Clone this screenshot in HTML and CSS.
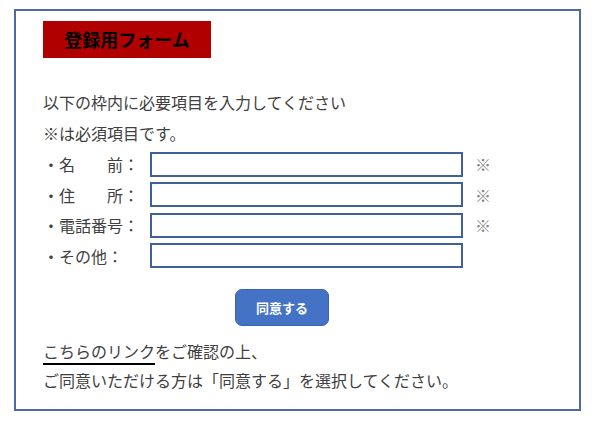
FILE: index.html
```html
<!DOCTYPE html>
<html>
  <head>
    <meta charset="utf-8" />
    <title>登録用フォーム</title>
    <link rel="stylesheet" href="styles.css">
  </head>
  <body>
    <div class="form-box">
      <div class="title">登録用フォーム</div>

      <p class="intro">以下の枠内に必要項目を入力してください</p>
      <p class="intro">※は必須項目です。</p>

      <div class="row">
        <span class="label">・名　　前：</span>
        <input class="field" type="text">
        <span class="req">※</span>
      </div>
      <div class="row">
        <span class="label">・住　　所：</span>
        <input class="field" type="text">
        <span class="req">※</span>
      </div>
      <div class="row">
        <span class="label">・電話番号：</span>
        <input class="field" type="text">
        <span class="req">※</span>
      </div>
      <div class="row">
        <span class="label">・その他：</span>
        <input class="field" type="text">
      </div>

      <button class="agree-btn">同意する</button>

      <p class="note"><a class="link" href="#">こちらのリンク</a>をご確認の上、</p>
      <p class="note">ご同意いただける方は「同意する」を選択してください。</p>
    </div>
  </body>
</html>
```

FILE: styles.css
```css
* {
  margin: 0;
  padding: 0;
  box-sizing: border-box;
}

body {
  width: 614px;
  height: 423px;
  background: #ffffff;
  font-family: "Noto Sans CJK JP", "Noto Sans", sans-serif;
  font-size: 16px;
  color: #404040;
  overflow: hidden;
}

.form-box {
  margin: 9px 0 0 14px;
  width: 567px;
  height: 402px;
  border: 2px solid #4d6aa3;
  padding: 10px 0 0 27px;
}

.title {
  width: 168px;
  height: 37px;
  line-height: 37px;
  background: #b00000;
  color: #000000;
  font-size: 18px;
  font-weight: 700;
  text-align: center;
}

.intro {
  line-height: 31px;
}

.intro:first-of-type {
  margin-top: 29px;
}

.row {
  display: flex;
  align-items: center;
  height: 30.5px;
}

.row:first-of-type {
  margin-top: 1px;
}

.label {
  width: 107px;
  white-space: nowrap;
}

.field {
  width: 313px;
  height: 25px;
  border: 2px solid #40609c;
  background: #ffffff;
  outline: none;
}

.req {
  margin-left: 12px;
  color: #808080;
}

.agree-btn {
  display: block;
  margin: 18px 0 0 192px;
  width: 94px;
  height: 37px;
  border: 1px solid #3a64ad;
  border-radius: 7px;
  background: #4472c4;
  color: #ffffff;
  font-family: "Noto Sans CJK JP", sans-serif;
  font-size: 13px;
  font-weight: 700;
  cursor: pointer;
}

.note {
  line-height: 29px;
}

.agree-btn + .note {
  margin-top: 11px;
}

.link {
  color: #404040;
  text-decoration: underline;
  text-decoration-color: #000000;
  text-decoration-thickness: 1.5px;
  text-underline-offset: 5px;
}
```
